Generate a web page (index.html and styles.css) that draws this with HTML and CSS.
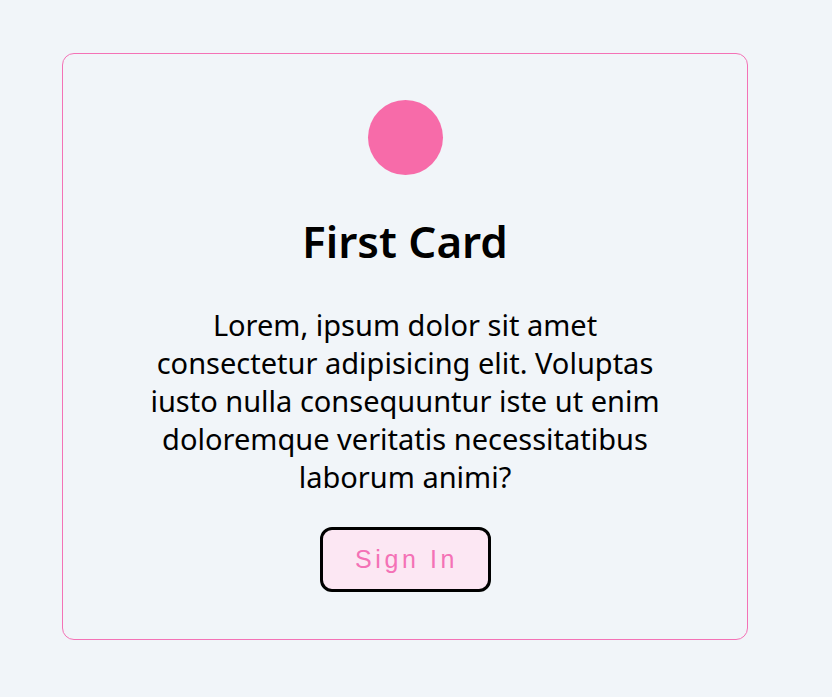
FILE: index.html
```html
<!DOCTYPE html>
<html>
<head>
<meta charset="utf-8">
<link rel="stylesheet" href="styles.css">
</head>
<body>
<div class="card">
  <div class="dot"></div>
  <h1 class="title">First Card</h1>
  <p class="text">Lorem, ipsum dolor sit amet consectetur adipisicing elit. Voluptas iusto nulla consequuntur iste ut enim doloremque veritatis necessitatibus laborum animi?</p>
  <button class="btn">Sign In</button>
</div>
</body>
</html>
```
FILE: styles.css
```css
html, body {
  margin: 0;
  padding: 0;
  background: #f1f5f9;
}
body {
  padding: 53px 84px 0 62px;
  font-family: "Noto Sans", "Open Sans", sans-serif;
}
.card {
  box-sizing: border-box;
  width: 686px;
  height: 587px;
  border: 1px solid #f472b6;
  border-radius: 12px;
  display: flex;
  flex-direction: column;
  align-items: center;
  padding-top: 46px;
}
.dot {
  width: 75px;
  height: 75px;
  border-radius: 50%;
  background: #f76ba9;
}
.title {
  margin: 38px 0 0;
  font-size: 44px;
  line-height: 56px;
  font-weight: 600;
  color: #000;
}
.text {
  margin: 37px 0 0;
  width: 535px;
  text-align: center;
  font-size: 29px;
  line-height: 38px;
  color: #000;
}
.btn {
  margin-top: 31px;
  width: 171px;
  height: 65px;
  border: 3px solid #000;
  border-radius: 12px;
  background: #fce7f3;
  color: #f472b6;
  font-family: "Liberation Sans", Arial, sans-serif;
  font-size: 25px;
  letter-spacing: 3.6px;
  padding: 0 0 0 3px;
}
```
